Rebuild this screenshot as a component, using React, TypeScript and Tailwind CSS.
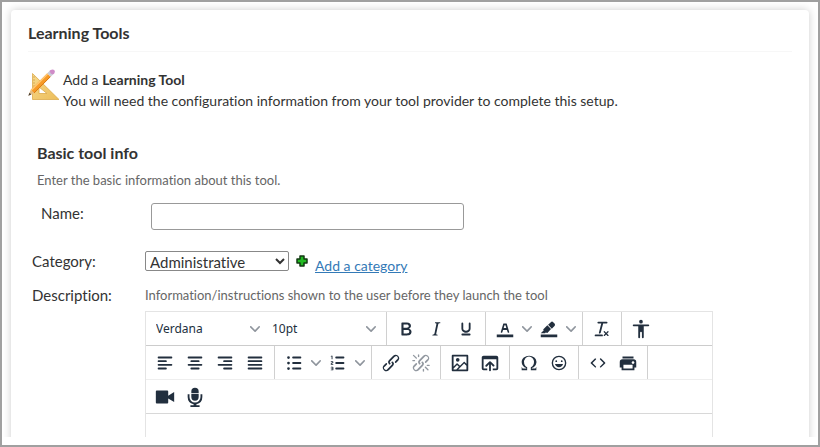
import React, { useState } from 'react';

const CHEVRON = 'M8.7 2.2c.3-.3.8-.3 1 0 .4.4.4.9 0 1.2L5.7 7.8c-.3.3-.9.3-1.2 0L.2 3.4a.8.8 0 0 1 0-1.2c.3-.3.8-.3 1.1 0L5 6l3.7-3.8z';
const COLOR_BAR = 'M3 18h18v3H3z';

const ICONS = {
  bold: 'M7.8 19c-.3 0-.5 0-.6-.2l-.2-.5V5.7c0-.2 0-.4.2-.5l.6-.2h5c1.5 0 2.7.3 3.5 1 .7.6 1.1 1.4 1.1 2.5a3 3 0 0 1-.6 1.9c-.4.6-1 1-1.6 1.2.4.1.9.3 1.3.6s.8.7 1 1.2c.4.4.5 1 .5 1.6 0 1.3-.4 2.3-1.3 3-.8.7-2.1 1-3.8 1H7.8zm5-8.3c.6 0 1.2-.1 1.6-.5.4-.3.6-.7.6-1.3 0-1.1-.8-1.7-2.3-1.7H9.3v3.5h3.4zm.5 6c.7 0 1.3-.1 1.7-.4.4-.4.6-.9.6-1.5s-.2-1-.7-1.4c-.4-.3-1-.4-2-.4H9.4v3.8h4z',
  italic: 'M16.7 4.7l-.1.9h-.3c-.6 0-1 0-1.4.3-.3.3-.4.6-.5 1.1l-2.1 9.8v.6c0 .5.4.8 1.4.8h.2l-.2.8H8l.2-.8h.2c1.1 0 1.8-.5 2-1.5l2-9.8.1-.5c0-.6-.4-.8-1.4-.8h-.3l.2-.9h5.8z',
  underline: 'M16 5c.6 0 1 .4 1 1v5.500a4 4 0 0 1-.4 1.800l-1 1.400a5.300 5.300 0 0 1-5.500 1 5 5 0 0 1-1.600-1c-.5-.4-.8-.9-1.100-1.400a4 4 0 0 1-.4-1.800V6c0-.6.4-1 1-1s1 .4 1 1v5.500c0 .3 0 .6.2 1l.6.7a3.300 3.300 0 0 0 2.200.8 3.400 3.400 0 0 0 2.200-.8c.3-.2.4-.5.6-.8l.2-.9V6c0-.6.4-1 1-1zM8 17h8c.6 0 1 .4 1 1s-.4 1-1 1H8a1 1 0 0 1 0-2z',
  textColor: COLOR_BAR + 'M8.7 16h-.8a.5.5 0 0 1-.5-.6l2.7-9c.1-.3.3-.4.5-.4h2.8c.2 0 .4.1.5.4l2.7 9a.5.5 0 0 1-.5.6h-.8a.5.5 0 0 1-.4-.4l-.7-2.2c0-.3-.3-.4-.5-.4h-3.4c-.2 0-.4.1-.5.4l-.7 2.2c0 .3-.2.4-.4.4zm2.6-7.6l-.6 2a.5.5 0 0 0 .5.6h1.6a.5.5 0 0 0 .5-.6l-.6-2c0-.3-.3-.4-.5-.4h-.4c-.2 0-.4.1-.5.4z',
  highlight: COLOR_BAR + 'M7.7 16.7H3l3.3-3.3-.7-.8L10.2 8l4 4.1-4 4.2c-.2.2-.6.2-.8 0l-.6-.7-1.1 1.1zM11 7.4l3-2.900a2 2 0 0 1 2.600 0L18 6c.7.7.7 2 0 2.700l-2.900 2.900-1.800-1.800z',
  clear: 'M13.2 6a1 1 0 0 1 0 .2l-2.6 10a1 1 0 0 1-1 .8h-.2a.8.8 0 0 1-.8-1l2.6-10H8a1 1 0 1 1 0-2h9a1 1 0 0 1 0 2h-3.8zM5 18h7a1 1 0 0 1 0 2H5a1 1 0 0 1 0-2zm13 1.5L16.5 18 15 19.5a.7.7 0 0 1-1-1l1.5-1.5-1.5-1.5a.7.7 0 0 1 1-1l1.5 1.5 1.5-1.5a.7.7 0 0 1 1 1L17.5 17l1.5 1.5a.7.7 0 0 1-1 1z',
  a11y: 'M12 2a2 2 0 0 1 2 2 2 2 0 0 1-2 2 2 2 0 0 1-2-2c0-1.1.9-2 2-2zm8 7h-5v12c0 .6-.4 1-1 1a1 1 0 0 1-1-1v-5c0-.6-.4-1-1-1a1 1 0 0 0-1 1v5c0 .6-.4 1-1 1a1 1 0 0 1-1-1V9H4a1 1 0 1 1 0-2h16c.6 0 1 .4 1 1s-.4 1-1 1z',
  alignLeft: 'M5 5h14c.6 0 1 .4 1 1s-.4 1-1 1H5a1 1 0 1 1 0-2zm0 4h8c.6 0 1 .4 1 1s-.4 1-1 1H5a1 1 0 1 1 0-2zm0 8h8c.6 0 1 .4 1 1s-.4 1-1 1H5a1 1 0 0 1 0-2zm0-4h14c.6 0 1 .4 1 1s-.4 1-1 1H5a1 1 0 0 1 0-2z',
  alignCenter: 'M5 5h14c.6 0 1 .4 1 1s-.4 1-1 1H5a1 1 0 1 1 0-2zm3 4h8c.6 0 1 .4 1 1s-.4 1-1 1H8a1 1 0 1 1 0-2zm0 8h8c.6 0 1 .4 1 1s-.4 1-1 1H8a1 1 0 0 1 0-2zm-3-4h14c.6 0 1 .4 1 1s-.4 1-1 1H5a1 1 0 0 1 0-2z',
  alignRight: 'M5 5h14c.6 0 1 .4 1 1s-.4 1-1 1H5a1 1 0 1 1 0-2zm6 4h8c.6 0 1 .4 1 1s-.4 1-1 1h-8a1 1 0 0 1 0-2zm0 8h8c.6 0 1 .4 1 1s-.4 1-1 1h-8a1 1 0 0 1 0-2zm-6-4h14c.6 0 1 .4 1 1s-.4 1-1 1H5a1 1 0 0 1 0-2z',
  justify: 'M5 5h14c.6 0 1 .4 1 1s-.4 1-1 1H5a1 1 0 1 1 0-2zm0 4h14c.6 0 1 .4 1 1s-.4 1-1 1H5a1 1 0 1 1 0-2zm0 4h14c.6 0 1 .4 1 1s-.4 1-1 1H5a1 1 0 0 1 0-2zm0 4h14c.6 0 1 .4 1 1s-.4 1-1 1H5a1 1 0 0 1 0-2z',
  bullets: 'M11 5h8c.6 0 1 .4 1 1s-.4 1-1 1h-8a1 1 0 0 1 0-2zm0 6h8c.6 0 1 .4 1 1s-.4 1-1 1h-8a1 1 0 0 1 0-2zm0 6h8c.6 0 1 .4 1 1s-.4 1-1 1h-8a1 1 0 0 1 0-2zM4.5 6a1.5 1.5 0 1 1 3 0 1.5 1.5 0 0 1-3 0zm0 6a1.5 1.5 0 1 1 3 0 1.5 1.5 0 0 1-3 0zm0 6a1.5 1.5 0 1 1 3 0 1.5 1.5 0 0 1-3 0z',
  numbers: 'M10 17h8c.6 0 1 .4 1 1s-.4 1-1 1h-8a1 1 0 0 1 0-2zm0-6h8c.6 0 1 .4 1 1s-.4 1-1 1h-8a1 1 0 0 1 0-2zm0-6h8c.6 0 1 .4 1 1s-.4 1-1 1h-8a1 1 0 1 1 0-2zM6 4v3.5c0 .3-.2.5-.5.5a.5.5 0 0 1-.5-.5V5h-.5a.5.5 0 0 1 0-1H6zm-1 8.8l.2.2h1.3c.3 0 .5.2.5.5s-.2.5-.5.5H4.9a1 1 0 0 1-.9-1V13c0-.4.3-.8.6-1l1.2-.4.2-.3a.2.2 0 0 0-.2-.2H4.5a.5.5 0 0 1-.5-.5c0-.3.2-.5.5-.5h1.6c.5 0 .9.4.9 1v.1c0 .4-.3.8-.6 1l-1.2.4-.2.3zM7 17v2c0 .6-.4 1-1 1H4.5a.5.5 0 0 1 0-1h1.2c.2 0 .3-.1.3-.3 0-.2-.1-.3-.3-.3H4.4a.4.4 0 1 1 0-.8h1.3c.2 0 .3-.1.3-.3 0-.2-.1-.3-.3-.3H4.5a.5.5 0 1 1 0-1H6c.6 0 1 .4 1 1z',
  link: 'M6.2 12.3a1 1 0 0 1 1.4 1.4l-2.1 2a2 2 0 1 0 2.7 2.8l4.8-4.8a1 1 0 0 0 0-1.4 1 1 0 1 1 1.4-1.3 2.9 2.9 0 0 1 0 4L9.6 20a3.9 3.9 0 0 1-5.5-5.5l2-2zm11.6-.6a1 1 0 0 1-1.4-1.4l2-2a2 2 0 1 0-2.6-2.8L11 10.3a1 1 0 0 0 0 1.4A1 1 0 1 1 9.6 13a2.9 2.9 0 0 1 0-4L14.4 4a3.9 3.9 0 0 1 5.5 5.5l-2 2z',
  unlink: 'M6.2 12.3a1 1 0 0 1 1.4 1.4l-2 2a2 2 0 1 0 2.6 2.8l4.8-4.8a1 1 0 0 0 0-1.4 1 1 0 1 1 1.4-1.3 2.9 2.9 0 0 1 0 4L9.6 20a3.9 3.9 0 0 1-5.5-5.5l2-2zm11.6-.6a1 1 0 0 1-1.4-1.4l2.1-2a2 2 0 1 0-2.7-2.8L11 10.3a1 1 0 0 0 0 1.4A1 1 0 1 1 9.6 13a2.9 2.9 0 0 1 0-4L14.4 4a3.9 3.9 0 0 1 5.5 5.5l-2 2zM7.6 6.3a.8.8 0 0 1-1 1.1L3.3 4.2a.7.7 0 1 1 1-1l3.2 3.1zM5.1 8.6a.8.8 0 0 1 0 1.5H3a.8.8 0 0 1 0-1.5H5zm5-3.5a.8.8 0 0 1-1.5 0V3a.8.8 0 0 1 1.5 0V5zm6 11.8a.8.8 0 0 1 1-1l3.2 3.2a.8.8 0 0 1-1 1L16 17zm-2.2 2a.8.8 0 0 1 1.5 0V21a.8.8 0 0 1-1.5 0V19zm5-3.5a.7.7 0 1 1 0-1.5H21a.8.8 0 0 1 0 1.5H19z',
  image: 'M5 15.7l3.3-3.2c.3-.3.7-.3 1 0L12 15l4.1-4c.3-.4.8-.4 1 0l2 1.9V5H5v10.7zM5 18V19h3l2.8-2.9-2-2L5 17.9zm14-3l-2.5-2.4-6.4 6.5H19v-4zM4 3h16c.6 0 1 .4 1 1v16c0 .6-.4 1-1 1H4a1 1 0 0 1-1-1V4c0-.6.4-1 1-1zm5.5 7.5a2 2 0 1 0 0-4 2 2 0 0 0 0 4z',
  browse: 'M19 4a2 2 0 0 1 2 2v12a2 2 0 0 1-2 2h-4v-2h4V8H5v10h4v2H5a2 2 0 0 1-2-2V6c0-1.1.9-2 2-2h14zm-8 9.4l-2.3 2.3a1 1 0 1 1-1.4-1.4l4-4a1 1 0 0 1 1.4 0l4 4a1 1 0 0 1-1.4 1.4L13 13.4V20a1 1 0 0 1-2 0v-6.6z',
  omega: 'M15 18h4l1-2v4h-6v-3.3l1.4-1a6 6 0 0 0 1.8-2.9 6.3 6.3 0 0 0-.1-4.1 5.8 5.8 0 0 0-3-3.2c-.6-.3-1.3-.5-2.1-.5a5.1 5.1 0 0 0-3.9 1.8 6.3 6.3 0 0 0-1.3 6 6.2 6.2 0 0 0 1.8 3l1.4.9V20H4v-4l1 2h4v-.5l-2-1L5.4 15A6.5 6.5 0 0 1 4 11c0-1 .2-1.9.6-2.7A7 7 0 0 1 6.3 6C7.1 5.4 8 5 9 4.5c1-.3 2-.5 3.1-.5a8.8 8.8 0 0 1 5.7 2 7 7 0 0 1 1.7 2.3 6 6 0 0 1 .2 4.8c-.2.7-.6 1.3-1 1.9a7.6 7.6 0 0 1-3.6 2.5v.5z',
  emoji: 'M9 11c.6 0 1-.4 1-1s-.4-1-1-1a1 1 0 0 0-1 1c0 .6.4 1 1 1zm6 0c.6 0 1-.4 1-1s-.4-1-1-1a1 1 0 0 0-1 1c0 .6.4 1 1 1zm-3 5.5c2.1 0 4-1.5 4.4-3.5H7.6c.5 2 2.3 3.5 4.4 3.5zM12 4a8 8 0 1 0 0 16 8 8 0 0 0 0-16zm0 14.5a6.5 6.5 0 1 1 0-13 6.5 6.5 0 0 1 0 13z',
  code: 'M9.8 15.7c.3.3.3.8 0 1-.3.4-.9.4-1.2 0l-4.4-4.1a.8.8 0 0 1 0-1.2l4.4-4.2c.3-.3.9-.3 1.2 0 .3.3.3.8 0 1.1L6 12l3.8 3.7zM14.2 15.7c-.3.3-.3.8 0 1 .4.4.9.4 1.2 0l4.4-4.1c.3-.3.3-.9 0-1.2l-4.4-4.2a.8.8 0 0 0-1.2 0c-.3.3-.3.8 0 1.1L18 12l-3.8 3.7z',
  print: 'M18 8H6a3 3 0 0 0-3 3v6h2v3h14v-3h2v-6a3 3 0 0 0-3-3zm-1 10H7v-4h10v4zm.5-5c-.8 0-1.5-.7-1.5-1.5s.7-1.5 1.5-1.5 1.5.7 1.5 1.5-.7 1.5-1.5 1.5zm.5-8H6v2h12V5z',
  video: 'M3 5h11.500a1 1 0 0 1 1 1v4.500L22 6.500v11l-6.500-4V18a1 1 0 0 1-1 1H3a1 1 0 0 1-1-1V6a1 1 0 0 1 1-1z',
  mic: 'M12 2a4 4 0 0 1 4 4v1.800H8V6a4 4 0 0 1 4-4zM8 8.800h8V12a4 4 0 0 1-8 0zM4 9h2v3a6 6 0 0 0 12 0V9h2v3a8 8 0 0 1-6.500 7.800V21H17v2H7v-2h3.500v-1.200A8 8 0 0 1 4 12z',
};

type IconName = keyof typeof ICONS;

const ToolIcon = ({ name }: { name: IconName }) => (
  <svg viewBox="0 0 24 24" className="size-[22px] shrink-0" fill="currentColor" fillRule="evenodd" aria-hidden="true">
    <path d={ICONS[name]} />
  </svg>
);

const Chevron = () => (
  <svg viewBox="0 0 10 10" className="size-[10px] shrink-0 text-[#8f959d]" fill="currentColor" aria-hidden="true">
    <path d={CHEVRON} />
  </svg>
);

const ToolButton = ({ name, label, disabled }: { name: IconName; label: string; disabled?: boolean }) => (
  <button type="button" aria-label={label} title={label} disabled={disabled}
    className="flex h-[30px] w-[30px] items-center justify-center rounded-sm hover:bg-gray-200 disabled:text-[#9298a0]">
    <ToolIcon name={name} />
  </button>
);

const SplitButton = ({ name, label }: { name: IconName; label: string }) => (
  <div className="flex">
    <ToolButton name={name} label={label} />
    <button type="button" aria-label={`${label} options`} className="flex w-[14px] items-center justify-center hover:bg-gray-200">
      <Chevron />
    </button>
  </div>
);

const ToolSelect = ({ label, options }: { label: string; options: string[] }) => (
  <div className="relative w-[116px]">
    <select aria-label={label} className="h-[30px] w-full appearance-none bg-transparent pl-[6px] font-['Noto_Sans',sans-serif] text-[12px]">
      {options.map(o => <option key={o}>{o}</option>)}
    </select>
    <span className="pointer-events-none absolute inset-y-0 right-[6px] flex items-center"><Chevron /></span>
  </div>
);

const ToolGroup = ({ children, last }: { children: React.ReactNode; last?: boolean }) => (
  <div className={`flex items-center px-1 ${last ? '' : 'border-r border-[#d0d0d0]'}`}>{children}</div>
);

const ToolRow = ({ children, className }: { children: React.ReactNode; className: string }) => (
  <div className={`flex h-[34px] border-b ${className}`}>{children}</div>
);

const Editor = () => (
  <div className="w-[568px] border border-[#e4e4e4] text-[#222f3e]">
    <div role="toolbar" aria-label="Formatting">
      <ToolRow className="border-[#cccccc]">
        <ToolGroup>
          <ToolSelect label="Font" options={['Verdana', 'Arial', 'Georgia']} />
          <ToolSelect label="Font size" options={['10pt', '12pt', '14pt']} />
        </ToolGroup>
        <ToolGroup>
          <ToolButton name="bold" label="Bold" />
          <ToolButton name="italic" label="Italic" />
          <ToolButton name="underline" label="Underline" />
        </ToolGroup>
        <ToolGroup>
          <SplitButton name="textColor" label="Text color" />
          <SplitButton name="highlight" label="Background color" />
        </ToolGroup>
        <ToolGroup>
          <ToolButton name="clear" label="Clear formatting" />
        </ToolGroup>
        <ToolGroup last>
          <ToolButton name="a11y" label="Accessibility checker" />
        </ToolGroup>
      </ToolRow>
      <ToolRow className="border-[#eeeeee]">
        <ToolGroup>
          <ToolButton name="alignLeft" label="Align left" />
          <ToolButton name="alignCenter" label="Align center" />
          <ToolButton name="alignRight" label="Align right" />
          <ToolButton name="justify" label="Justify" />
        </ToolGroup>
        <ToolGroup>
          <SplitButton name="bullets" label="Bullet list" />
          <SplitButton name="numbers" label="Numbered list" />
        </ToolGroup>
        <ToolGroup>
          <ToolButton name="link" label="Insert link" />
          <ToolButton name="unlink" label="Remove link" disabled />
        </ToolGroup>
        <ToolGroup>
          <ToolButton name="image" label="Insert image" />
          <ToolButton name="browse" label="Upload file" />
        </ToolGroup>
        <ToolGroup>
          <ToolButton name="omega" label="Special character" />
          <ToolButton name="emoji" label="Emojis" />
        </ToolGroup>
        <ToolGroup>
          <ToolButton name="code" label="Source code" />
          <ToolButton name="print" label="Print" />
        </ToolGroup>
      </ToolRow>
      <ToolRow className="border-[#d8d8d8]">
        <ToolGroup last>
          <ToolButton name="video" label="Record video" />
          <ToolButton name="mic" label="Record audio" />
        </ToolGroup>
      </ToolRow>
    </div>
    <textarea id="description" className="block h-40 w-full resize-none p-2 text-sm outline-none" />
  </div>
);

const SetSquareIcon = () => (
  <svg viewBox="0 0 32 32" className="size-8 shrink-0" aria-hidden="true">
    <defs>
      <linearGradient id="wood" x1="0" y1="0" x2="1" y2="1">
        <stop offset="0" stopColor="#f7d98b" />
        <stop offset="1" stopColor="#ecbd5a" />
      </linearGradient>
    </defs>
    <path d="M4.500 4.500v26h26.500z M11 18v6.500h8z" fill="url(#wood)" fillRule="evenodd" stroke="#dcab4d" strokeWidth=".8" strokeLinejoin="round" />
    <path d="M5 8h2M5 11h2M5 14h2M5 17h2" stroke="#c89a45" strokeWidth=".7" />
    {/* pencil: body with a lit and a shaded side, then metal band, eraser and tip */}
    <path d="M4.500 22.500L21 6" stroke="#f79a26" strokeWidth="5" />
    <path d="M3.300 21.300L19.800 4.800" stroke="#ffc773" strokeWidth="1.400" />
    <path d="M6 24L22.500 7.500" stroke="#d97a17" strokeWidth="1" />
    <path d="M21 6L23.500 3.500" stroke="#c9ccd6" strokeWidth="5" />
    <path d="M23.200 3.800L24.300 2.700" stroke="#cf8bc8" strokeWidth="5" />
    <circle cx="24.500" cy="2.800" r="2.400" fill="#cf8bc8" />
    <path d="M.3 26.700l2.400-6 3.600 3.600z" fill="#e3bd84" />
    <path d="M.3 26.700l1.200-3 1.800 1.800z" fill="#4a4036" />
  </svg>
);

const PlusIcon = () => (
  <svg viewBox="0 0 12 12" className="size-3 shrink-0" aria-hidden="true">
    <path d="M4 1h4v3h3v4H8v3H4V8H1V4h3z" fill="#22bb22" stroke="#123a12" strokeWidth="1.500" strokeLinejoin="round" />
  </svg>
);

export default function App() {
  const [name, setName] = useState('');

  return (
    <div className="flex h-screen flex-col border-2 border-[#a0a0a0] bg-white pb-2 font-['Lato',sans-serif] text-[15px] leading-[21px] text-[#333333] [font-variant-ligatures:none]">
      <div className="min-h-0 flex-1 overflow-hidden px-[9px] pt-2">
        <main className="rounded bg-white px-[17px] pb-6 shadow-[0_0_8px_rgba(0,0,0,0.2)]">
          <h1 className="border-b border-[#f7f7f7] pt-3 pb-2 text-[16px] font-bold">Learning Tools</h1>

          <div className="flex items-start gap-[3px] pt-[17px] text-[14px]">
            <SetSquareIcon />
            <div>
              <p>Add a <strong>Learning Tool</strong></p>
              <p>You will need the configuration information from your tool provider to complete this setup.</p>
            </div>
          </div>

          <form className="pt-[31px] pl-1" onSubmit={e => e.preventDefault()}>
            <h2 className="pl-[5px] text-[16px] font-bold">Basic tool info</h2>
            <p className="pt-[7px] pl-[5px] text-[13px] text-[#666666]">Enter the basic information about this tool.</p>

            <div className="flex items-start pt-3 pl-[9px]">
              <label htmlFor="name" className="w-[110px]">Name:</label>
              <input id="name" type="text" value={name} onChange={e => setName(e.target.value)}
                className="h-[27px] w-[313px] rounded-[3px] border border-[#999999] px-2" />
            </div>

            <div className="flex items-start pt-[21px]">
              <label htmlFor="category" className="w-[113px]">Category:</label>
              <select id="category" className="h-5 w-[144px] rounded-[2px] border border-[#888888] bg-white leading-[18px]">
                <option>Administrative</option>
                <option>Assessment</option>
              </select>
              <span className="flex items-start gap-[7px] pt-1 pl-[7px]">
                <PlusIcon />
                <a href="#add-category" className="text-[14px] text-[#337ab7] underline">Add a category</a>
              </span>
            </div>

            <div className="flex items-start pt-[9px]">
              <label htmlFor="description" className="w-[113px] shrink-0">Description:</label>
              <div>
                <p className="pb-[5px] text-[13px] text-[#666666]">Information/instructions shown to the user before they launch the tool</p>
                <Editor />
              </div>
            </div>
          </form>
        </main>
      </div>
    </div>
  );
}
